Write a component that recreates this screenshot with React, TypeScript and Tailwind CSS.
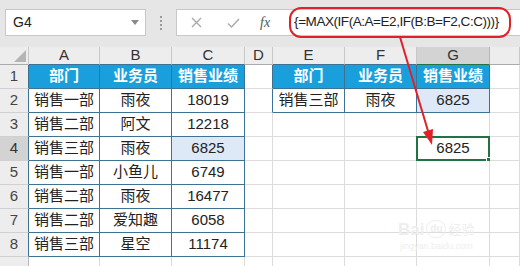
import React from 'react';

type Kind = 'th' | 'td' | 'hl' | 'sel' | 'none';

interface Cell {
  text?: string;
  kind: Kind;
}

const LETTERS = ['A', 'B', 'C', 'D', 'E', 'F', 'G', ''];

// rows 1..9, columns A..H
const sheet: Cell[][] = [
  ['部门', '业务员', '销售业绩', '', '部门', '业务员', '销售业绩', ''],
  ['销售一部', '雨夜', '18019', '', '销售三部', '雨夜', '6825', ''],
  ['销售二部', '阿文', '12218', '', '', '', '', ''],
  ['销售三部', '雨夜', '6825', '', '', '', '6825', ''],
  ['销售一部', '小鱼儿', '6749', '', '', '', '', ''],
  ['销售二部', '雨夜', '16477', '', '', '', '', ''],
  ['销售二部', '爱知趣', '6058', '', '', '', '', ''],
  ['销售三部', '星空', '11174', '', '', '', '', ''],
  ['', '', '', '', '', '', '', ''],
].map((row, r) =>
  row.map((text, c) => {
    const inLeft = r <= 7 && c <= 2;
    const inRight = r <= 1 && c >= 4 && c <= 6;
    let kind: Kind = 'none';
    if (inLeft || inRight) kind = r === 0 ? 'th' : 'td';
    if ((r === 3 && c === 2) || (r === 1 && c === 6)) kind = 'hl';
    if (r === 3 && c === 6) kind = 'sel';
    return { text, kind };
  })
);

const isTable = (r: number, c: number) => {
  const k = sheet[r]?.[c]?.kind;
  return k === 'th' || k === 'td' || k === 'hl';
};

const SheetCell = ({ r, c }: { r: number; c: number }) => {
  const cell = sheet[r][c];
  const darkRight = isTable(r, c) || isTable(r, c + 1);
  const darkBottom = isTable(r, c) || isTable(r + 1, c);
  const bg =
    cell.kind === 'th'
      ? 'bg-[#19a0dc] text-white font-bold'
      : cell.kind === 'hl'
        ? 'bg-[#dde9f6] text-[#222]'
        : 'bg-white text-[#222]';

  return (
    <div
      className={`relative flex items-center justify-center border-r border-b text-[15px] ${bg} ${
        darkRight ? 'border-r-[#3d7294]' : 'border-r-[#dcdcdc]'
      } ${darkBottom ? 'border-b-[#3d7294]' : 'border-b-[#dcdcdc]'}`}
    >
      {cell.text}
      {cell.kind === 'sel' && (
        <>
          <div className="absolute -left-px -top-px -right-px -bottom-px border-2 border-[#217346]" />
          <div className="absolute -right-[4px] -bottom-[4px] w-[7px] h-[7px] bg-[#217346] border border-white" />
        </>
      )}
    </div>
  );
};

const App: React.FC = () => {
  return (
    <div className="relative w-[520px] h-[266px] overflow-hidden bg-white font-['Liberation_Sans','Noto_Sans_CJK_SC',sans-serif]">
      {/* Name box + formula bar */}
      <div className="flex items-start h-[47px] bg-[#e6e6e6] pt-[9px] pl-[5px]">
        <div className="flex items-center justify-between w-[141px] h-[27px] bg-white border border-[#c8c8c8] pl-[7px] pr-[6px]">
          <span className="text-[14px] text-[#222]">G4</span>
          <svg width="8" height="5" viewBox="0 0 8 5">
            <path d="M0 0 L8 0 L4 5 Z" fill="#8a8a8a" />
          </svg>
        </div>
        <div className="flex flex-col items-center justify-center gap-[2px] w-[30px] h-[27px]">
          <span className="w-[2px] h-[2px] bg-[#9a9a9a]" />
          <span className="w-[2px] h-[2px] bg-[#9a9a9a]" />
          <span className="w-[2px] h-[2px] bg-[#9a9a9a]" />
          <span className="w-[2px] h-[2px] bg-[#9a9a9a]" />
        </div>
        <div className="flex items-center flex-1 h-[27px] bg-white border border-[#c8c8c8] border-r-0">
          <svg width="11" height="11" viewBox="0 0 11 11" className="ml-[14px]">
            <path d="M1 1 L10 10 M10 1 L1 10" stroke="#a9a9a9" strokeWidth="1.4" />
          </svg>
          <svg width="13" height="10" viewBox="0 0 13 10" className="ml-[25px]">
            <path d="M1 5.5 L4.5 9 L12 1" stroke="#a9a9a9" strokeWidth="1.4" fill="none" />
          </svg>
          <span className="ml-[20px] text-[14px] italic text-[#555] font-['Liberation_Serif',serif]">fx</span>
          <span className="ml-[24px] text-[13.5px] tracking-[-0.45px] text-[#222] whitespace-nowrap">
            {'{=MAX(IF(A:A=E2,IF(B:B=F2,C:C)))}'}
          </span>
        </div>
      </div>

      {/* Worksheet grid */}
      <div className="grid grid-cols-[29px_71px_72px_73px_28px_72px_72px_73px_1fr] grid-rows-[18px_repeat(9,24px)]">
        <div className="flex items-end justify-end bg-[#ededed] border-r border-b border-r-[#c9c9c9] border-b-[#ababab] pr-[2px] pb-[2px]">
          <svg width="12" height="12" viewBox="0 0 12 12">
            <path d="M0 12 L12 12 L12 0 Z" fill="#b5b5b5" />
          </svg>
        </div>
        {LETTERS.map((l, c) => (
          <div
            key={`h${c}`}
            className={`flex items-center justify-center border-r border-b text-[15px] text-[#333] ${
              c === 6 ? 'bg-[#d3d3d3] border-r-[#b8b8b8] border-b-[#217346]' : 'bg-[#ededed] border-r-[#c9c9c9]'
            } ${c !== 6 && isTable(0, c) ? 'border-b-[#3d7294]' : ''} ${
              c !== 6 && !isTable(0, c) ? 'border-b-[#ababab]' : ''
            }`}
          >
            {l}
          </div>
        ))}
        {sheet.map((row, r) => (
          <React.Fragment key={`r${r}`}>
            <div
              className={`flex items-center justify-center border-r border-b border-b-[#d0d0d0] text-[15px] ${
                r === 3 ? 'bg-[#d3d3d3] text-[#333]' : 'bg-[#ededed] text-[#444]'
              } ${isTable(r, 0) ? 'border-r-[#3d7294]' : 'border-r-[#b8b8b8]'}`}
            >
              {r < 8 ? r + 1 : ''}
            </div>
            {row.map((_, c) => (
              <SheetCell key={`c${r}-${c}`} r={r} c={c} />
            ))}
          </React.Fragment>
        ))}
      </div>

      {/* Watermark */}
      <div className="absolute left-[398px] top-[220px] flex flex-col items-center text-[#eeeeee] pointer-events-none">
        <div className="flex items-center gap-[2px]">
          <span className="text-[17px] font-bold leading-none">Bai</span>
          <span className="flex items-center justify-center w-[20px] h-[18px] rounded-full border border-[#eeeeee] text-[10px] font-bold leading-none">
            du
          </span>
          <span className="text-[13px] leading-none">经验</span>
        </div>
        <span className="mt-[4px] text-[9px] leading-none">jingyan.baidu.com</span>
      </div>

      {/* Red annotation */}
      <svg className="absolute left-0 top-0 pointer-events-none" width="520" height="266" viewBox="0 0 520 266">
        <rect x="290" y="8" width="220" height="29" rx="11" fill="none" stroke="#de2229" strokeWidth="2" />
        <path d="M400 37 L428 131" stroke="#de2229" strokeWidth="2" />
        <path d="M432 145 L433 129 L423 132 Z" fill="#de2229" />
      </svg>
    </div>
  );
};

export default App;
